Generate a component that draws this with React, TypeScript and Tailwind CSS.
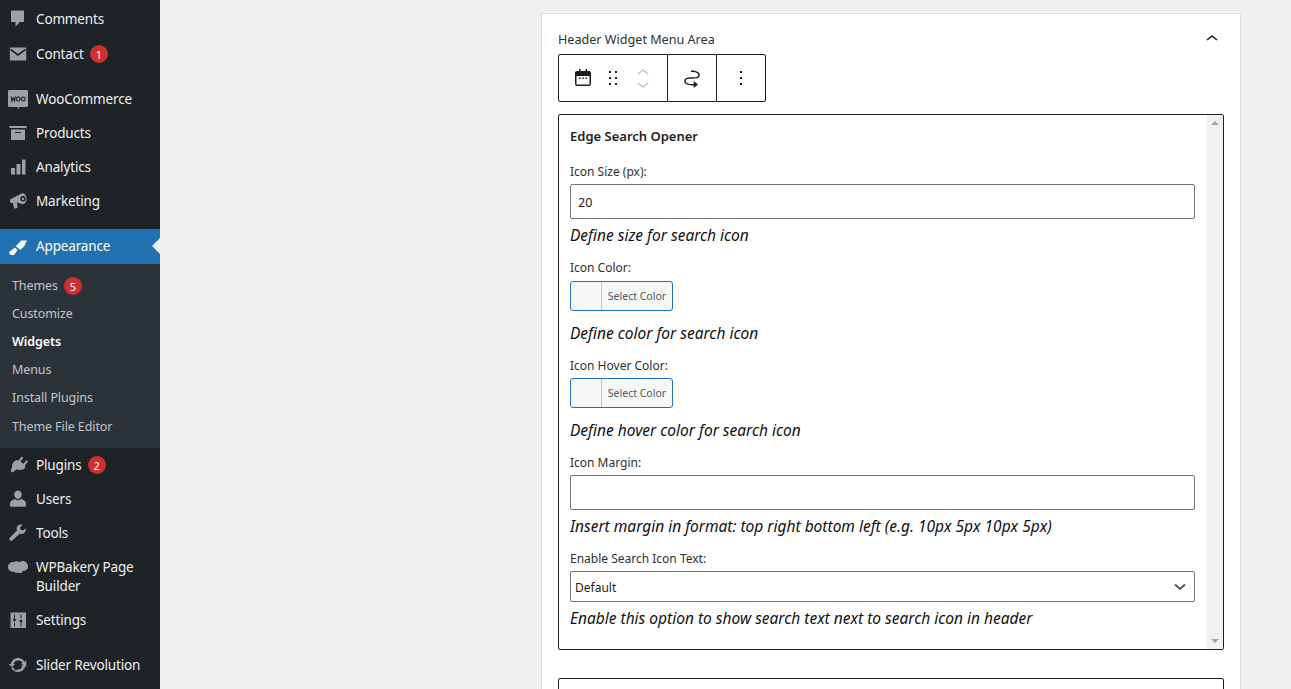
// App.tsx
// WordPress widgets screen, scrolled: admin menu on the left, widget area card on the right.

import type { ReactNode } from "react";

const FONT = "font-['Noto_Sans','Open_Sans',sans-serif]";

function MenuIcon({ children }: { children: ReactNode }) {
  return (
    <svg viewBox="0 0 20 20" className="h-5 w-5 shrink-0 fill-[#9ca1a7]">
      {children}
    </svg>
  );
}

function Badge({ n }: { n: number }) {
  return (
    <span className="ml-[6px] flex h-[18px] w-[18px] items-center justify-center rounded-full bg-[#d0302f] text-[11px] leading-none text-white">
      {n}
    </span>
  );
}

function MenuItem({
  icon,
  label,
  badge,
  mb,
}: {
  icon: ReactNode;
  label: ReactNode;
  badge?: number;
  mb?: string;
}) {
  return (
    <div className={`flex h-[34px] items-center text-[13.5px] tracking-[-0.15px] text-[#f0f0f1] ${mb ?? ""}`}>
      <div className="flex w-[36px] justify-center pl-[1px] pr-[2px]">{icon}</div>
      <span>{label}</span>
      {badge !== undefined && <Badge n={badge} />}
    </div>
  );
}

function SubItem({ label, badge, active }: { label: string; badge?: number; active?: boolean }) {
  return (
    <div
      className={`flex h-[28px] items-center pl-[12px] text-[12.5px] tracking-[-0.1px] ${
        active ? "font-semibold text-white" : "text-[#c3c4c7]"
      }`}
    >
      <span>{label}</span>
      {badge !== undefined && <Badge n={badge} />}
    </div>
  );
}

function Sidebar() {
  return (
    <aside className="h-[689px] w-[160px] shrink-0 overflow-hidden bg-[#1d2327] pt-[2px]">
      <MenuItem
        label="Comments"
        mb="mb-px"
        icon={
          <MenuIcon>
            <path d="M4 1.500h11c.6 0 1 .4 1 1v9.500c0 .6-.4 1-1 1h-3l-4.500 4.500V13H4c-.6 0-1-.4-1-1V2.500c0-.6.4-1 1-1z" />
          </MenuIcon>
        }
      />
      <MenuItem
        label="Contact"
        badge={1}
        mb="mb-[11px]"
        icon={
          <MenuIcon>
            <path d="M1.800 3.500h16.400v13H1.800z" />
            <path d="M2.500 5.500L10 11l7.500-5.500" fill="none" stroke="#1d2327" strokeWidth="1.600" />
          </MenuIcon>
        }
      />
      <MenuItem
        label="WooCommerce"
        icon={
          <MenuIcon>
            <path d="M1.500 1h17c.9 0 1.500.7 1.500 1.500v14c0 .8-.6 1.500-1.500 1.500h-7L10.500 20l-1-2h-8C.6 18 0 17.300 0 16.500v-14C0 1.700.6 1 1.500 1z" />
            <path
              d="M3 7.500l.9 4.500 1.300-3.300L6.500 12l.9-4.500M10.200 8a1.900 2 0 1 0 .01 0M15.300 8a1.900 2 0 1 0 .01 0"
              fill="none"
              stroke="#1d2327"
              strokeWidth="1.100"
            />
          </MenuIcon>
        }
      />
      <MenuItem
        label="Products"
        icon={
          <MenuIcon>
            <path d="M1.500 3h17v2h-17V3zM3 6.500h14V17H3V6.500zm4 2.500v1h6V9H7z" fillRule="evenodd" />
          </MenuIcon>
        }
      />
      <MenuItem
        label="Analytics"
        icon={
          <MenuIcon>
            <path d="M3 11h4v6.500H3V11zm5.500-4h4v10.500h-4V7zM14 2.500h3.500v15H14v-15z" />
          </MenuIcon>
        }
      />
      <MenuItem
        label="Marketing"
        mb="mb-[11px]"
        icon={
          <MenuIcon>
            <path
              d="M2 8.500L12.500 3c1-.6 2-.8 3-.5 2 .7 3 3 3 5.500 0 2.500-1 4.500-3 5-1 .2-2 0-3-.5L9 11.500 9.500 17l-3.500.8L5 12H3.500L2 11V8.500zM15 5a2.800 2.800 0 1 0 .01 0zm0 1.700a1.200 1.200 0 1 1-.01 0z"
              fillRule="evenodd"
            />
          </MenuIcon>
        }
      />

      <div className="relative flex h-[35px] items-center bg-[#2271b1] text-[13.5px] tracking-[-0.15px] text-white">
        <div className="flex w-[36px] justify-center pl-[1px] pr-[2px]">
          <svg viewBox="0 0 20 20" className="h-5 w-5 fill-white">
            <path d="M1.500 17c-.8-1-.3-2.400.8-3L7 10.500l2.500 2.500-3 4.500c-.8 1-3.700 1-5 -.5zM7.800 9.200L13 3.500h6l-.5 1.500-1.500.5 1 1-1.500 1 .5 1-4.700 4.500-4.500-3.800z" />
          </svg>
        </div>
        <span>Appearance</span>
        <span className="absolute right-0 top-[9px] h-0 w-0 border-y-[8px] border-r-[8px] border-y-transparent border-r-[#f0f0f1]" />
      </div>
      <div className="bg-[#2c3338] pb-[7px] pt-[8px]">
        <SubItem label="Themes" badge={5} />
        <SubItem label="Customize" />
        <SubItem label="Widgets" active />
        <SubItem label="Menus" />
        <SubItem label="Install Plugins" />
        <div className="pt-px">
          <SubItem label="Theme File Editor" />
        </div>
      </div>

      <MenuItem
        label="Plugins"
        badge={2}
        icon={
          <MenuIcon>
            <path d="M13.500 1.500l1.800 1.200-2.800 3.800 3 2.300 3-3.800 1.500 1.500-3 3.800c.7 2-.3 3.700-2 4.200l-3.300.5-3.500-.5-3.500 3L2.500 16l1.500-3.500L4.300 9l2.200-3c1.500-.8 2.800-.8 4.300-.5l2.700-4z" />
          </MenuIcon>
        }
      />
      <MenuItem
        label="Users"
        icon={
          <MenuIcon>
            <path d="M10 1.500a3.800 3.800 0 0 1 3.800 4c0 2.300-1.700 4.500-3.800 4.500S6.200 7.800 6.200 5.500A3.800 3.800 0 0 1 10 1.500zM7 10c1.600 1.500 4.400 1.500 6 0 3 .8 5 2.500 5 4.500v2.200c0 .6-.8 1-2 1H4c-1.200 0-2-.4-2-1v-2.200C2 12.500 4 10.800 7 10z" />
          </MenuIcon>
        }
      />
      <MenuItem
        label="Tools"
        icon={
          <MenuIcon>
            <path d="M17.800 5.200l-3 2.300-2.300-.8-.5-2.400 2.800-2.500c-2-.6-4.500 0-5.500 1.700-.9 1.500-.8 2.800-.3 4L2 14.500c-1 1-.9 2-.2 2.800.8.8 2 .8 2.800 0l7.300-6.700c1.400.6 3 .4 4.300-.6 1.300-1.200 1.900-3 1.600-4.800z" />
          </MenuIcon>
        }
      />
      <div className="flex h-[53px] pt-[8px] text-[13.5px] leading-[19px] tracking-[-0.15px] text-[#f0f0f1]">
        <div className="flex w-[36px] justify-center">
          <svg viewBox="0 0 20 20" className="h-5 w-5 fill-[#9ca1a7]">
            <path d="M0 9c0-3 2.500-5.500 6-5 1.500-1 4-1 5.500.2 2-1.600 5-1.400 6.800.3 2.200 2.200 2.200 5.500.5 7-1 1-2.500 1.300-3.800 1.200-1 2.300-3 3-4.800 1.800-1.300.7-3 .5-3.800-.8C3 14 0 12.500 0 9z" />
          </svg>
        </div>
        <span className="w-[110px]">WPBakery Page Builder</span>
      </div>
      <MenuItem
        label="Settings"
        mb="mb-[11px]"
        icon={
          <MenuIcon>
            <path
              d="M2.500 2.500h15.500V18H2.500V2.500zm3.500 2V9H4.500l2 3 2-3H7V4.500H6zM6 13v3.500h1V13H6zm6.500-8.500V8h1V4.500h-1zM13 9l-2 3h1.500v4.500h1V12H15l-2-3z"
              fillRule="evenodd"
            />
          </MenuIcon>
        }
      />
      <MenuItem
        label="Slider Revolution"
        icon={
          <MenuIcon>
            <path
              d="M10 3c2.800 0 5.200 1.500 6.500 3.800l1.800-1-.1 5.700-5-2.800 1.500-.9A5.200 5.200 0 0 0 10 5.500 5 5 0 0 0 5.500 9H7l-3 3-3.500-3h2.300C3.600 5.600 6.500 3 10 3zm6 5.500l3.500 2.700h-2.300c-.8 3.300-3.700 5.800-7.200 5.800a7.500 7.500 0 0 1-6.500-3.800l-1.500.9.100-.1 2.800-2 2.100 2.300-1 .7A5.200 5.200 0 0 0 10 14.500c2 0 3.700-1.300 4.500-3.300H13l3-2.700z"
            />
          </MenuIcon>
        }
      />
    </aside>
  );
}

function FieldLabel({ children }: { children: ReactNode }) {
  return <div className="text-[12px] leading-[17px] text-[#2c3338]">{children}</div>;
}

function Help({ children }: { children: ReactNode }) {
  return <div className="text-[15.5px] italic leading-[22px] text-[#111111]">{children}</div>;
}

function ColorButton() {
  return (
    <div className="flex h-[30px] w-[103px] overflow-hidden rounded-[3px] border border-[#2271b1] bg-[#f6f7f7]">
      <span className="w-[31px] border-r border-[#c3c4c7]" />
      <span className="flex flex-1 items-center justify-center pt-px text-[10.5px] text-[#50575e]">Select Color</span>
    </div>
  );
}

function Toolbar() {
  return (
    <div className="flex h-[48px] w-[208px] rounded-[2px] border border-[#1e1e1e] bg-white">
      <div className="flex w-[109px] items-center border-r border-[#1e1e1e] pl-[12px]">
        <svg viewBox="0 0 24 24" className="h-6 w-6 fill-[#1e1e1e]">
          <path
            fillRule="evenodd"
            d="M8 3v2H6a2 2 0 0 0-2 2v11a2 2 0 0 0 2 2h12a2 2 0 0 0 2-2V7a2 2 0 0 0-2-2h-2V3h-1.500v2h-5V3H8zM5.500 10h13v8a.5.5 0 0 1-.5.5H6a.5.5 0 0 1-.5-.5v-8zM8 11.500h1.500V13H8v-1.500zm3.250 0h1.500V13h-1.500v-1.500zm3.250 0H16V13h-1.500v-1.500z"
          />
        </svg>
        <svg viewBox="0 0 24 24" className="ml-[6px] h-6 w-6 fill-[#1e1e1e]">
          <path d="M8 7h2V5H8v2zm0 6h2v-2H8v2zm0 6h2v-2H8v2zm6-14v2h2V5h-2zm0 8h2v-2h-2v2zm0 6h2v-2h-2v2z" />
        </svg>
        <div className="ml-[6px] flex flex-col items-center">
          <svg viewBox="0 0 24 12" className="h-3 w-6 fill-[#c4c4c4]">
            <path d="M6.500 8.400L12 4l5.500 4.400-.9 1.200L12 6 7.500 9.600l-1-1.200z" />
          </svg>
          <svg viewBox="0 0 24 12" className="mt-[3px] h-3 w-6 fill-[#c4c4c4]">
            <path d="M17.500 3.600L12 8 6.500 3.600l.9-1.200L12 6l4.500-3.600 1 1.200z" />
          </svg>
        </div>
      </div>
      <div className="flex w-[49px] items-center justify-center border-r border-[#1e1e1e] pr-px">
        <svg viewBox="0 0 24 24" className="h-6 w-6 fill-[#1e1e1e]">
          <path d="M19.750 9c0-1.257-.565-2.197-1.390-2.858-.797-.64-1.827-1.017-2.815-1.247-1.802-.42-3.703-.403-4.383-.396L11 4.500V6l.177-.001c.696-.006 2.416-.02 4.028.356.887.207 1.670.518 2.216.957.52.416.829.945.829 1.688 0 .592-.167.966-.407 1.230-.255.281-.656.508-1.236.674-1.190.34-2.820.346-4.607.346h-.077c-1.692 0-3.527 0-4.942.404-.732.209-1.424.545-1.935 1.108-.526.579-.796 1.330-.796 2.238 0 1.257.565 2.197 1.390 2.858.797.64 1.827 1.017 2.815 1.247 1.802.42 3.703.403 4.383.396L13 19.500h.714V22L18 18.500 13.714 15v3H13l-.177.001c-.696.006-2.416.02-4.028-.356-.887-.207-1.670-.518-2.216-.957-.52-.416-.829-.945-.829-1.688 0-.592.167-.966.407-1.230.255-.281.656-.508 1.237-.674 1.189-.34 2.819-.346 4.606-.346h.077c1.692 0 3.527 0 4.941-.404.732-.209 1.425-.545 1.936-1.108.526-.579.796-1.330.796-2.238z" />
        </svg>
      </div>
      <div className="flex flex-1 items-center justify-center pr-px">
        <svg viewBox="0 0 24 24" className="h-6 w-6 fill-[#1e1e1e]">
          <path d="M13 19h-2v-2h2v2zm0-6h-2v-2h2v2zm0-6h-2V5h2v2z" />
        </svg>
      </div>
    </div>
  );
}

function WidgetForm() {
  return (
    <div className="mt-[12px] flex h-[536px] rounded-[2px] border border-[#1e1e1e] bg-white">
      <div className="flex-1 overflow-hidden pl-[11px] pr-[12px] pt-[12px]">
        <div className="text-[13px] font-semibold leading-[18px] text-[#1e1e1e]">Edge Search Opener</div>

        <div className="mt-[18px]">
          <FieldLabel>Icon Size (px):</FieldLabel>
        </div>
        <div className="mt-[4px] flex h-[35px] items-center rounded-[2px] border border-[#757575] pl-[7px] pt-[3px] text-[12.5px] text-[#1e1e1e]">
          20
        </div>
        <div className="mt-[5px]">
          <Help>Define size for search icon</Help>
        </div>

        <div className="mt-[13px]">
          <FieldLabel>Icon Color:</FieldLabel>
        </div>
        <div className="mt-[5px]">
          <ColorButton />
        </div>
        <div className="mt-[11px]">
          <Help>Define color for search icon</Help>
        </div>

        <div className="mt-[13px]">
          <FieldLabel>Icon Hover Color:</FieldLabel>
        </div>
        <div className="mt-[4px]">
          <ColorButton />
        </div>
        <div className="mt-[11px]">
          <Help>Define hover color for search icon</Help>
        </div>

        <div className="mt-[13px]">
          <FieldLabel>Icon Margin:</FieldLabel>
        </div>
        <div className="mt-[4px] h-[35px] rounded-[2px] border border-[#757575]" />
        <div className="mt-[5px]">
          <Help>Insert margin in format: top right bottom left (e.g. 10px 5px 10px 5px)</Help>
        </div>

        <div className="mt-[13px]">
          <FieldLabel>Enable Search Icon Text:</FieldLabel>
        </div>
        <div className="mt-[4px] flex h-[31px] items-center justify-between rounded-[2px] border border-[#757575] pl-[4px] pr-[6px] text-[12px] text-[#1e1e1e]">
          <span className="pt-[2px]">Default</span>
          <svg viewBox="0 0 16 16" className="h-4 w-4 fill-none stroke-[#50575e] stroke-2">
            <path d="M3 5.500l5 4.500 5-4.500" />
          </svg>
        </div>
        <div className="mt-[5px]">
          <Help>Enable this option to show search text next to search icon in header</Help>
        </div>
      </div>
      <div className="flex w-[16px] flex-col items-center justify-between bg-[#f1f1f1] py-[6px]">
        <span className="h-0 w-0 border-x-[4px] border-b-[4px] border-x-transparent border-b-[#a3a3a3]" />
        <span className="h-0 w-0 border-x-[4px] border-t-[4px] border-x-transparent border-t-[#a3a3a3]" />
      </div>
    </div>
  );
}

export default function App() {
  return (
    <div className={`flex h-[689px] w-[1291px] overflow-hidden bg-[#f0f0f1] ${FONT}`}>
      <Sidebar />
      <main className="flex-1 pl-[381px] pt-[13px]">
        <div className="h-[700px] w-[700px] border border-[#e0e0e0] bg-white px-[16px]">
          <div className="flex h-[40px] items-end justify-between pb-[6px] text-[12.6px] leading-[17px] text-[#2c3338]">
            <span>Header Widget Menu Area</span>
            <svg viewBox="0 0 24 24" className="mb-[-3px] h-6 w-6 fill-[#1e1e1e]">
              <path d="M6.500 12.400L12 8l5.500 4.400-.9 1.200L12 10l-4.500 3.600-1-1.200z" />
            </svg>
          </div>
          <Toolbar />
          <WidgetForm />
          <div className="mt-[28px] h-[100px] rounded-[2px] border border-[#1e1e1e]" />
        </div>
      </main>
    </div>
  );
}
